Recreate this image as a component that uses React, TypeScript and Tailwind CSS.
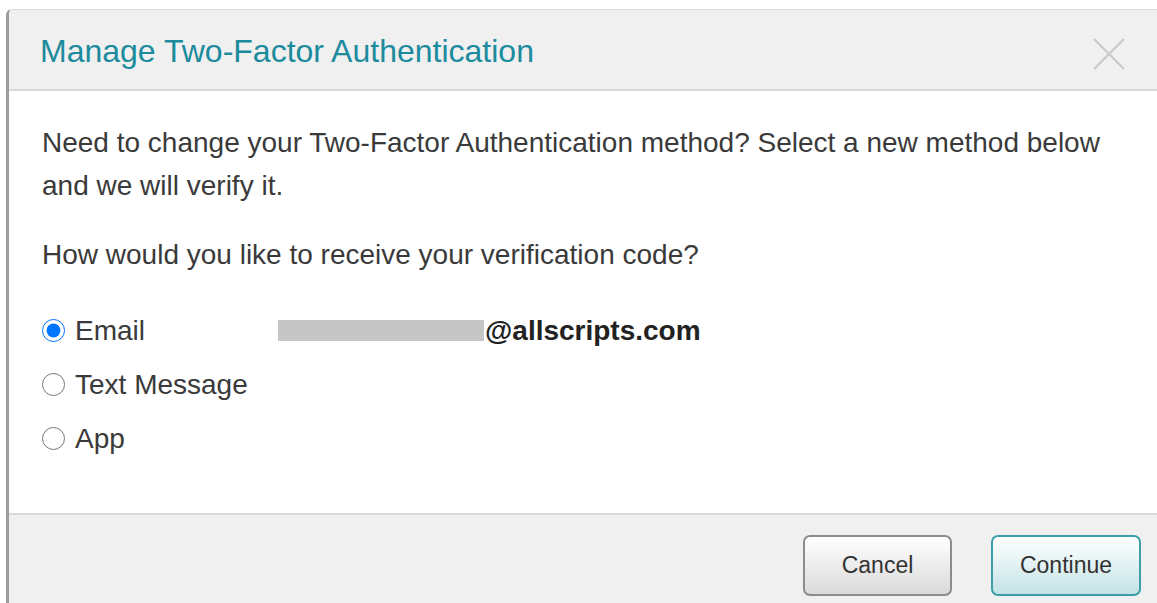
import { useState } from "react";

type Method = "email" | "sms" | "app";

const methods: { id: Method; label: string }[] = [
    { id: "email", label: "Email" },
    { id: "sms", label: "Text Message" },
    { id: "app", label: "App" },
];

const App = () => {
    const [method, setMethod] = useState<Method>("email");

    return (
        <div
            className="w-full h-[603px] bg-white pt-[9px] pl-[6px] overflow-hidden text-[#3a3a3a]"
            style={{ fontFamily: '"Liberation Sans", Arial, sans-serif' }}
        >
            <div className="h-full flex flex-col border-l-[3px] border-t border-l-[#9c9c9c] border-t-[#dcdcdc] rounded-tl-[6px] overflow-hidden">
                {/* Header */}
                <div className="h-[81px] shrink-0 bg-[#f0f0f0] border-b-2 border-[#d9d9d9] flex items-center justify-between pl-[31px] pr-[31px]">
                    <h2 className="text-[32px] leading-none text-[#1b8b9d] mt-[3px]">
                        Manage Two-Factor Authentication
                    </h2>
                    <button className="w-[34px] h-[34px] flex items-center justify-center mt-[8px]">
                        <svg width="34" height="34" viewBox="0 0 34 34" fill="none" stroke="#c9c9c9" strokeWidth="2.2">
                            <path d="M2 2 L32 32 M32 2 L2 32" />
                        </svg>
                    </button>
                </div>

                {/* Body */}
                <div className="flex-1 bg-white pl-[33px] pt-[30px] text-[28px] leading-[43px]">
                    <p>
                        Need to change your Two-Factor Authentication method? Select a new method below
                        <br />
                        and we will verify it.
                    </p>
                    <p className="mt-[26px]">How would you like to receive your verification code?</p>

                    <div className="mt-[27px]">
                        {methods.map((m) => (
                            <label key={m.id} className="flex items-center h-[54px] cursor-pointer">
                                <span className="w-[236px] flex items-center shrink-0">
                                    <input
                                        type="radio"
                                        name="method"
                                        checked={method === m.id}
                                        onChange={() => setMethod(m.id)}
                                        className="w-[23px] h-[23px] m-0 accent-[#0075ff]"
                                    />
                                    <span className="ml-[10px]">{m.label}</span>
                                </span>
                                {m.id === "email" && (
                                    <span className="flex items-center font-bold text-[#222]">
                                        <span className="inline-block w-[206px] h-[21px] bg-[#c6c6c6]" />
                                        <span className="ml-[1px]">@allscripts.com</span>
                                    </span>
                                )}
                            </label>
                        ))}
                    </div>
                </div>

                {/* Footer */}
                <div className="h-[90px] shrink-0 bg-[#f0f0f0] border-t-2 border-[#d9d9d9] flex justify-end items-start pt-[20px] pr-[16px] gap-[39px]">
                    <button className="w-[149px] h-[61px] rounded-[7px] border-2 border-[#8c8c8c] bg-linear-to-b from-white to-[#dadada] text-[23px] text-[#333]">
                        Cancel
                    </button>
                    <button className="w-[150px] h-[61px] rounded-[7px] border-2 border-[#3c9ea6] bg-linear-to-b from-white to-[#c4e3e6] text-[23px] text-[#333]">
                        Continue
                    </button>
                </div>
            </div>
        </div>
    );
};

export default App;
